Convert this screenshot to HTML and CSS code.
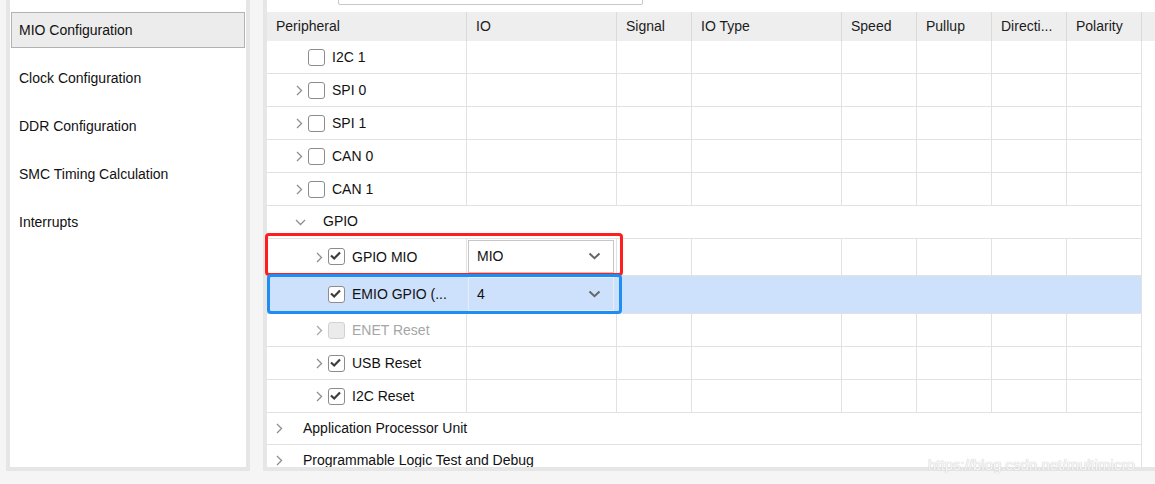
FILE: index.html
```html
<!DOCTYPE html>
<html lang="en">

<head>
  <meta charset="UTF-8">
  <title>MIO Configuration</title>
  <link rel="stylesheet" href="styles.css">
</head>

<body>
  <div class="page">
    <div class="nav-panel">
      <div class="nav-item active">MIO Configuration</div>
      <div class="nav-item">Clock Configuration</div>
      <div class="nav-item">DDR Configuration</div>
      <div class="nav-item">SMC Timing Calculation</div>
      <div class="nav-item">Interrupts</div>
    </div>

    <div class="main-panel">
      <div class="toolbar">
        <div class="search-box"></div>
      </div>

      <div class="grid-header">
        <div class="cell c-tree">Peripheral</div>
        <div class="cell c-wide">IO</div>
        <div class="cell c-narrow">Signal</div>
        <div class="cell c-wide">IO Type</div>
        <div class="cell c-narrow">Speed</div>
        <div class="cell c-narrow">Pullup</div>
        <div class="cell c-narrow">Directi...</div>
        <div class="cell c-narrow">Polarity</div>
      </div>

      <div class="grid-body">
        <!-- level 1 peripherals -->
        <div class="row">
          <div class="cell c-tree lvl-1"><span class="toggle"></span><span class="check"></span><span class="label">I2C 1</span></div>
          <div class="cell c-wide"></div><div class="cell c-narrow"></div><div class="cell c-wide"></div><div class="cell c-narrow"></div><div class="cell c-narrow"></div><div class="cell c-narrow"></div><div class="cell c-narrow"></div>
        </div>
        <div class="row">
          <div class="cell c-tree lvl-1"><span class="toggle"><svg class="chev-r" viewBox="0 0 7 11"><path d="M1 1 L5.5 5.5 L1 10"/></svg></span><span class="check"></span><span class="label">SPI 0</span></div>
          <div class="cell c-wide"></div><div class="cell c-narrow"></div><div class="cell c-wide"></div><div class="cell c-narrow"></div><div class="cell c-narrow"></div><div class="cell c-narrow"></div><div class="cell c-narrow"></div>
        </div>
        <div class="row">
          <div class="cell c-tree lvl-1"><span class="toggle"><svg class="chev-r" viewBox="0 0 7 11"><path d="M1 1 L5.5 5.5 L1 10"/></svg></span><span class="check"></span><span class="label">SPI 1</span></div>
          <div class="cell c-wide"></div><div class="cell c-narrow"></div><div class="cell c-wide"></div><div class="cell c-narrow"></div><div class="cell c-narrow"></div><div class="cell c-narrow"></div><div class="cell c-narrow"></div>
        </div>
        <div class="row">
          <div class="cell c-tree lvl-1"><span class="toggle"><svg class="chev-r" viewBox="0 0 7 11"><path d="M1 1 L5.5 5.5 L1 10"/></svg></span><span class="check"></span><span class="label">CAN 0</span></div>
          <div class="cell c-wide"></div><div class="cell c-narrow"></div><div class="cell c-wide"></div><div class="cell c-narrow"></div><div class="cell c-narrow"></div><div class="cell c-narrow"></div><div class="cell c-narrow"></div>
        </div>
        <div class="row">
          <div class="cell c-tree lvl-1"><span class="toggle"><svg class="chev-r" viewBox="0 0 7 11"><path d="M1 1 L5.5 5.5 L1 10"/></svg></span><span class="check"></span><span class="label">CAN 1</span></div>
          <div class="cell c-wide"></div><div class="cell c-narrow"></div><div class="cell c-wide"></div><div class="cell c-narrow"></div><div class="cell c-narrow"></div><div class="cell c-narrow"></div><div class="cell c-narrow"></div>
        </div>

        <!-- GPIO group -->
        <div class="row">
          <div class="cell c-full lvl-1"><span class="toggle group"><svg class="chev-d" viewBox="0 0 11 7"><path d="M1 1 L5.5 5.5 L10 1"/></svg></span><span class="label">GPIO</span></div>
        </div>
        <div class="row tall">
          <div class="cell c-tree lvl-2"><span class="toggle"><svg class="chev-r" viewBox="0 0 7 11"><path d="M1 1 L5.5 5.5 L1 10"/></svg></span><span class="check on"><svg viewBox="0 0 17 17"><path d="M4 8.5 L7.2 11.5 L13 5.5"/></svg></span><span class="label">GPIO MIO</span></div>
          <div class="cell c-wide combo-cell">
            <div class="combo"><span>MIO</span><svg class="combo-arrow" viewBox="0 0 13 8"><path d="M1.5 1.5 L6.5 6.2 L11.5 1.5"/></svg></div>
          </div>
          <div class="cell c-narrow"></div><div class="cell c-wide"></div><div class="cell c-narrow"></div><div class="cell c-narrow"></div><div class="cell c-narrow"></div><div class="cell c-narrow"></div>
        </div>
        <div class="row tall selected">
          <div class="cell c-tree lvl-2"><span class="toggle"></span><span class="check on"><svg viewBox="0 0 17 17"><path d="M4 8.5 L7.2 11.5 L13 5.5"/></svg></span><span class="label">EMIO GPIO (...</span></div>
          <div class="cell c-wide combo-cell">
            <div class="combo"><span>4</span><svg class="combo-arrow" viewBox="0 0 13 8"><path d="M1.5 1.5 L6.5 6.2 L11.5 1.5"/></svg></div>
          </div>
          <div class="cell c-narrow"></div><div class="cell c-wide"></div><div class="cell c-narrow"></div><div class="cell c-narrow"></div><div class="cell c-narrow"></div><div class="cell c-narrow"></div>
        </div>
        <div class="row">
          <div class="cell c-tree lvl-2 disabled"><span class="toggle"><svg class="chev-r" viewBox="0 0 7 11"><path d="M1 1 L5.5 5.5 L1 10"/></svg></span><span class="check"></span><span class="label">ENET Reset</span></div>
          <div class="cell c-wide"></div><div class="cell c-narrow"></div><div class="cell c-wide"></div><div class="cell c-narrow"></div><div class="cell c-narrow"></div><div class="cell c-narrow"></div><div class="cell c-narrow"></div>
        </div>
        <div class="row">
          <div class="cell c-tree lvl-2"><span class="toggle"><svg class="chev-r" viewBox="0 0 7 11"><path d="M1 1 L5.5 5.5 L1 10"/></svg></span><span class="check on"><svg viewBox="0 0 17 17"><path d="M4 8.5 L7.2 11.5 L13 5.5"/></svg></span><span class="label">USB Reset</span></div>
          <div class="cell c-wide"></div><div class="cell c-narrow"></div><div class="cell c-wide"></div><div class="cell c-narrow"></div><div class="cell c-narrow"></div><div class="cell c-narrow"></div><div class="cell c-narrow"></div>
        </div>
        <div class="row">
          <div class="cell c-tree lvl-2"><span class="toggle"><svg class="chev-r" viewBox="0 0 7 11"><path d="M1 1 L5.5 5.5 L1 10"/></svg></span><span class="check on"><svg viewBox="0 0 17 17"><path d="M4 8.5 L7.2 11.5 L13 5.5"/></svg></span><span class="label">I2C Reset</span></div>
          <div class="cell c-wide"></div><div class="cell c-narrow"></div><div class="cell c-wide"></div><div class="cell c-narrow"></div><div class="cell c-narrow"></div><div class="cell c-narrow"></div><div class="cell c-narrow"></div>
        </div>

        <!-- top level groups -->
        <div class="row short">
          <div class="cell c-full lvl-0"><span class="toggle group"><svg class="chev-r" viewBox="0 0 7 11"><path d="M1 1 L5.5 5.5 L1 10"/></svg></span><span class="label">Application Processor Unit</span></div>
        </div>
        <div class="row">
          <div class="cell c-full lvl-0"><span class="toggle group"><svg class="chev-r" viewBox="0 0 7 11"><path d="M1 1 L5.5 5.5 L1 10"/></svg></span><span class="label">Programmable Logic Test and Debug</span></div>
        </div>
      </div>
    </div>
  </div>

  <!-- annotation frames drawn over the grid -->
  <div class="mark mark-red"></div>
  <div class="mark mark-blue"></div>

  <div class="watermark">https://blog.csdn.net/multimicro</div>
</body>

</html>
```

FILE: styles.css
```css
body {
  margin: 0;
  background: #f5f5f5;
  font-family: 'Liberation Sans', Arial, sans-serif;
  font-size: 14px;
  color: #111;
  overflow: hidden;
}

.page {
  display: flex;
  height: 484px;
}

/* left navigation */
.nav-panel {
  box-sizing: border-box;
  width: 244px;
  height: 471px;
  margin-left: 6px;
  background: #fff;
  border: 4px solid #e6e6e6;
  border-top: none;
  padding: 12px 1px 0 1px;
  display: flex;
  flex-direction: column;
  gap: 12px;
}

.nav-item {
  height: 36px;
  display: flex;
  align-items: center;
  padding-left: 7px;
  padding-bottom: 1px;
  border: 1px solid transparent;
  box-sizing: border-box;
}

.nav-item.active {
  background: #ececec;
  border-color: #b2b2b2;
}

/* right panel */
.main-panel {
  flex: 1;
  box-sizing: border-box;
  height: 471px;
  margin-left: 13px;
  background: #fff;
  border-left: 4px solid #e6e6e6;
  border-bottom: 4px solid #e6e6e6;
  overflow: hidden;
}

.toolbar {
  height: 12px;
  overflow: hidden;
}

.search-box {
  width: 305px;
  height: 24px;
  margin: -19px 0 0 71px;
  border: 1px solid #c8c8c8;
  border-radius: 2px;
  box-sizing: border-box;
}

.grid-header {
  display: flex;
  height: 29px;
  background: #eeeeee;
  color: #1c1c1c;
}

.grid-header .cell {
  border-right: 1px solid #dadada;
  padding-bottom: 2px;
}

.cell {
  box-sizing: border-box;
  display: flex;
  align-items: center;
  padding-left: 9px;
  height: 100%;
  white-space: nowrap;
  overflow: hidden;
}

.c-tree { width: 200px; }
.c-wide { width: 150px; }
.c-narrow { width: 75px; }
.c-full { width: 875px; padding-bottom: 2px; }

.grid-body .row {
  display: flex;
  width: 875px;
  height: 33px;
  box-sizing: border-box;
  border-bottom: 1px solid #e2e2e2;
}

.grid-body .row.tall { height: 37px; }
.grid-body .row.selected { height: 38px; }
.grid-body .row.short { height: 32px; }

.grid-body .cell {
  border-right: 1px solid #e2e2e2;
}

.row.tall .c-tree {
  padding-bottom: 1px;
}

.row.selected {
  background: #cde0fc;
}

.row.selected .cell {
  border-right-color: transparent;
}

.row.selected .cell:last-child {
  border-right-color: #e2e2e2;
}

/* tree indentation */
.lvl-0 { padding-left: 6px; }
.lvl-1 { padding-left: 26px; }
.lvl-2 { padding-left: 46px; }

.toggle {
  width: 15px;
  flex: none;
  display: flex;
  align-items: center;
}

.toggle.group {
  width: 30px;
}

.chev-r {
  width: 7px;
  height: 11px;
  margin-left: 3px;
  margin-top: 1px;
}

.chev-d {
  width: 11px;
  height: 7px;
  margin-left: 2px;
  margin-top: 2px;
}

.chev-r path,
.chev-d path {
  fill: none;
  stroke: #8e8e8e;
  stroke-width: 1.3;
}

.check {
  width: 17px;
  height: 17px;
  flex: none;
  box-sizing: border-box;
  border: 1.6px solid #8c8c8c;
  border-radius: 3px;
  background: #fff;
  margin-right: 7px;
  position: relative;
}

.check svg {
  position: absolute;
  left: -1.6px;
  top: -1.6px;
  width: 17px;
  height: 17px;
}

.check svg path {
  fill: none;
  stroke: #3c3c3c;
  stroke-width: 2.2;
}

.disabled .check {
  background: #ebebeb;
  border-color: #d2d2d2;
}

.disabled .label {
  color: #a6a6a6;
}

.disabled .chev-r path {
  stroke: #a8a8a8;
}

/* dropdown in IO column */
.combo-cell {
  padding: 1px 2px 2px 1px;
}

.combo {
  box-sizing: border-box;
  width: 100%;
  height: 100%;
  border: 1px solid #c6c6c6;
  background: #fff;
  display: flex;
  align-items: center;
  justify-content: space-between;
  padding: 0 12px 1px 8px;
}

.row.selected .combo {
  background: #cde0fc;
  border-color: #e8eef8;
}

.combo-arrow {
  width: 13px;
  height: 8px;
}

.combo-arrow path {
  fill: none;
  stroke: #666;
  stroke-width: 2;
}

/* annotation frames */
.mark {
  position: absolute;
  box-sizing: border-box;
  border-radius: 4px;
}

.mark-red {
  left: 265px;
  top: 233px;
  width: 358px;
  height: 43px;
  border: 3px solid #ff1e1e;
}

.mark-blue {
  left: 267px;
  top: 274px;
  width: 355px;
  height: 40px;
  border: 3px solid #1e8ef5;
}

.watermark {
  position: absolute;
  left: 928px;
  top: 456px;
  font-size: 15px;
  color: rgba(255, 255, 255, 0.9);
  text-shadow: 0 0 1px #c4c4c4, 0 0 1px #d0d0d0;
}
```
